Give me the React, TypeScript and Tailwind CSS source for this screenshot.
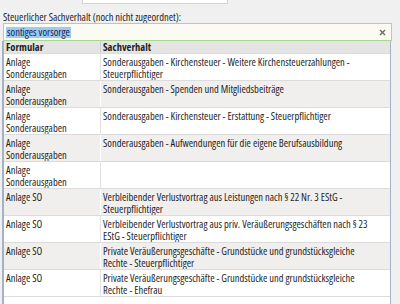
import React from "react";

type Row = { f: string[]; s: string[] };

const rows: Row[] = [
  { f: ["Anlage", "Sonderausgaben"], s: ["Sonderausgaben - Kirchensteuer - Weitere Kirchensteuerzahlungen -", "Steuerpflichtiger"] },
  { f: ["Anlage", "Sonderausgaben"], s: ["Sonderausgaben - Spenden und Mitgliedsbeiträge"] },
  { f: ["Anlage", "Sonderausgaben"], s: ["Sonderausgaben - Kirchensteuer - Erstattung - Steuerpflichtiger"] },
  { f: ["Anlage", "Sonderausgaben"], s: ["Sonderausgaben - Aufwendungen für die eigene Berufsausbildung"] },
  { f: ["Anlage", "Sonderausgaben"], s: [] },
  { f: ["Anlage SO"], s: ["Verbleibender Verlustvortrag aus Leistungen nach § 22 Nr. 3 EStG -", "Steuerpflichtiger"] },
  { f: ["Anlage SO"], s: ["Verbleibender Verlustvortrag aus priv. Veräußerungsgeschäften nach § 23", "EStG - Steuerpflichtiger"] },
  { f: ["Anlage SO"], s: ["Private Veräußerungsgeschäfte - Grundstücke und grundstücksgleiche", "Rechte - Steuerpflichtiger"] },
  { f: ["Anlage SO"], s: ["Private Veräußerungsgeschäfte - Grundstücke und grundstücksgleiche", "Rechte - Ehefrau"] },
];

export default function App() {
  return (
    <div
      className="w-[400px] h-[304px] overflow-hidden bg-[#f0f0f0] text-[10.5px] font-stretch-[80%] text-[#1e1e1e] flex flex-col"
      style={{ fontFamily: '"Open Sans", "Noto Sans", sans-serif' }}
    >
      <div className="ml-[82px] w-[146px] h-[4px] shrink-0 bg-white border border-t-0 border-[#d4d4d4]" />
      <div className="pl-[3px] pt-[7px] h-[19px] leading-[13px] shrink-0 whitespace-nowrap">
        Steuerlicher Sachverhalt (noch nicht zugeordnet):
      </div>
      <div className="ml-[3px] w-[389px] h-[18px] shrink-0 border border-[#a8d88c] bg-[#fbfbf3] flex items-center pl-[2px] pr-[5px]">
        <span className="bg-[#9dcbf0] text-[#202050] leading-[11px] h-[11px] px-[1px] whitespace-nowrap">sontiges vorsorge</span>
        <div className="flex-1" />
        <svg width="7" height="7" viewBox="0 0 7 7">
          <path d="M1 1 L6 6 M6 1 L1 6" stroke="#6a6a6a" strokeWidth="1.4" />
        </svg>
      </div>
      <div className="ml-[2px] w-[389px] flex-1 flex flex-col bg-white border-l-2 border-r border-l-[#a4b2c8] border-r-[#a4b2c8]">
        <div className="flex h-[12px] shrink-0 bg-[#e4e4e4] font-bold leading-[12px]">
          <div className="w-[97px] pl-[2px] border-r border-[#d0d0d0]">Formular</div>
          <div className="flex-1 pl-[2px]">Sachverhalt</div>
        </div>
        {rows.map((r, i) => (
          <div
            key={i}
            className={`flex h-[27px] shrink-0 border-t border-[#dcdcdc] leading-[12px] ${i % 2 === 1 ? "bg-[#f0efed]" : "bg-white"}`}
          >
            <div className={`w-[97px] pl-[2px] pt-[2px] border-r ${i % 2 === 1 ? "border-white" : "border-[#e2e2e2]"}`}>
              {r.f.map((t, j) => (
                <div key={j} className="whitespace-nowrap">{t}</div>
              ))}
            </div>
            <div className="flex-1 pl-[2px] pt-[2px]">
              {r.s.map((t, j) => (
                <div key={j} className="whitespace-nowrap">{t}</div>
              ))}
            </div>
          </div>
        ))}
        <div className="border-t border-[#dcdcdc] flex-1 bg-white" />
      </div>
    </div>
  );
}
